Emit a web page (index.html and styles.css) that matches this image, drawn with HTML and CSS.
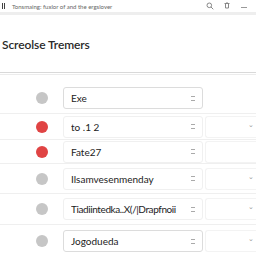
FILE: index.html
```html
<!doctype html>
<html lang="en">
<head>
	<meta charset="UTF-8" />
	<title>Screolse Tremers</title>
	<link rel="stylesheet" href="styles.css">
</head>
<body>
	<div class="topbar">
		<span class="grip"><i></i><i></i></span>
		<span class="crumb">Tonsmaing: fuxlor of and the ergslover</span>
		<span class="tools">
			<svg width="8" height="8" viewBox="0 0 8 8"><circle cx="3.3" cy="3.3" r="2.3" fill="none" stroke="#888" stroke-width="1"/><path d="M5 5l2.3 2.3" stroke="#888" stroke-width="1"/></svg>
			<svg width="8" height="8" viewBox="0 0 8 8"><path d="M1.5 1.5h5M2.5 1.5v4.5h3v-4.5M3.5 0.5h1" fill="none" stroke="#888" stroke-width="1"/></svg>
			<svg width="8" height="8" viewBox="0 0 8 8"><path d="M1 5.5h6" stroke="#999" stroke-width="1"/></svg>
		</span>
	</div>

	<h1 class="title">Screolse Tremers</h1>
	<div class="divider"></div>

	<ul class="list">
		<li class="row r1">
			<span class="dot"></span>
			<div class="field strong"><span>Exe</span><b class="ico"></b></div>
			<div class="side plain"></div>
		</li>
		<li class="row r2">
			<span class="dot red"></span>
			<div class="field"><span>to .1 2</span><b class="ico"></b></div>
			<div class="side"><em>&#8964;</em></div>
		</li>
		<li class="row r3">
			<span class="dot red"></span>
			<div class="field"><span>Fate27</span><b class="ico"></b></div>
			<div class="side"></div>
		</li>
		<li class="row r4">
			<span class="dot"></span>
			<div class="field"><span>Ilsamvesenmenday</span><b class="ico"></b></div>
			<div class="side"><em>&#8964;</em></div>
		</li>
		<li class="row r5">
			<span class="dot"></span>
			<div class="field"><span class="narrow">Tiadiintedka..X(/|Drapfnoii</span><b class="ico"></b></div>
			<div class="side"><em>&#8964;</em></div>
		</li>
		<li class="row r6">
			<span class="dot"></span>
			<div class="field strong"><span>Jogodueda</span><b class="ico"></b></div>
			<div class="side"><em>&#8964;</em></div>
		</li>
	</ul>
</body>
</html>
```

FILE: styles.css
```css
body{margin: 0;padding: 0;background: #fff;font-family: Lato, "Open Sans", sans-serif;color: #222;width: 256px;overflow: hidden;}

.topbar{height: 12px;display: flex;align-items: center;border-bottom: 3px solid #eeeeee;}
.grip{display: flex;gap: 1px;margin-left: 2px;width: 10px;}
.grip i{display: block;width: 1px;height: 6px;background: #444;}
.crumb{font-size: 6px;color: #666;flex: 1;white-space: nowrap;}
.tools{display: flex;gap: 9px;margin-right: 8px;}

.title{margin: 0;height: 57px;box-sizing: border-box;padding: 22px 0 0 2px;font-size: 12px;font-weight: 600;color: #2a2a2a;letter-spacing: -0.1px;}
.divider{height: 1px;border-top: 1px solid #d9d9d9;border-bottom: 1px solid #ececec;}

ul,li{margin: 0;padding: 0;list-style: none;}
.row{display: flex;align-items: center;border-bottom: 1px solid #efefef;box-sizing: border-box;}
.r1{height: 39px;padding-top: 8px;}
.r2{height: 26px;}
.r3{height: 24px;}
.r4{height: 30px;}
.r5{height: 31px;}
.r6{height: 32px;border-bottom: 0;}

.dot{width: 12px;height: 12px;border-radius: 50%;background: #c6c6c6;margin-left: 36px;margin-right: 15px;flex: none;}
.dot.red{background: #e04444;}

.field{width: 140px;height: 22px;box-sizing: border-box;border: 1px solid #f0f0f0;border-radius: 3px;display: flex;align-items: center;padding: 0 7px;font-size: 10px;color: #222;}
.field.strong{border-color: #dcdcdc;}
.field span{flex: 1;white-space: nowrap;overflow: hidden;}
.field .narrow{letter-spacing: -0.4px;}
.ico{width: 4px;height: 3px;border-top: 1px solid #aaa;border-bottom: 1px solid #aaa;}

.side{width: 51px;height: 22px;margin-left: 2px;box-sizing: border-box;border: 1px solid #f3f3f3;border-right: 0;border-radius: 3px 0 0 3px;position: relative;}
.side.plain{border-color: transparent;}
.side em{position: absolute;right: 2px;top: 3px;font-style: normal;font-size: 7px;color: #999;}
```
